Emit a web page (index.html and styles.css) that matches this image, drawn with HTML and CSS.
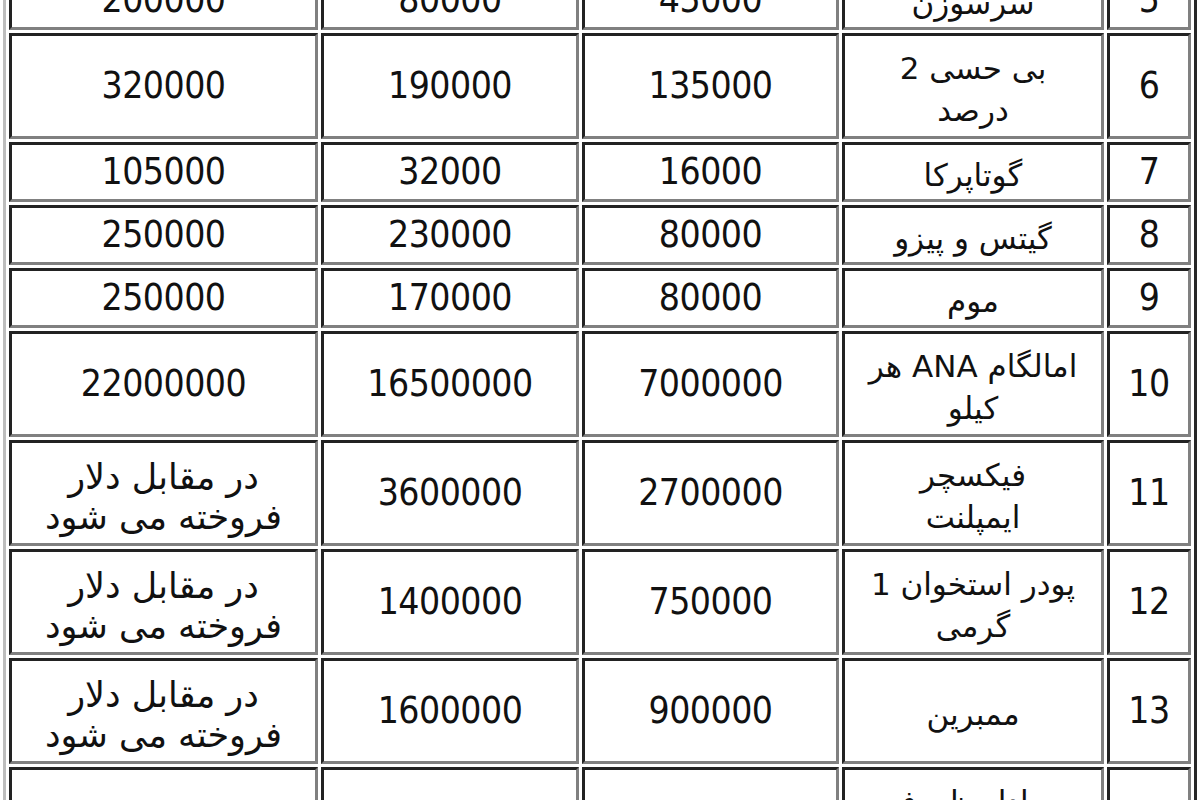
FILE: index.html
```html
<!DOCTYPE html>
<html lang="fa">
<head>
<meta charset="utf-8">
<title>قیمت مواد دندانپزشکی</title>
<link rel="stylesheet" href="styles.css">
</head>
<body>
<table class="prices" dir="rtl">
  <colgroup>
    <col class="c-idx">
    <col class="c-name">
    <col class="c-p1">
    <col class="c-p2">
    <col class="c-p3">
  </colgroup>
  <tbody>
    <tr class="single">
      <td class="num">5</td>
      <td class="txt">سرسوزن</td>
      <td class="num">45000</td>
      <td class="num">80000</td>
      <td class="num">200000</td>
    </tr>
    <tr class="double">
      <td class="num">6</td>
      <td class="txt">بی حسی 2<br>درصد</td>
      <td class="num">135000</td>
      <td class="num">190000</td>
      <td class="num">320000</td>
    </tr>
    <tr class="single">
      <td class="num">7</td>
      <td class="txt">گوتاپرکا</td>
      <td class="num">16000</td>
      <td class="num">32000</td>
      <td class="num">105000</td>
    </tr>
    <tr class="single">
      <td class="num">8</td>
      <td class="txt">گیتس و پیزو</td>
      <td class="num">80000</td>
      <td class="num">230000</td>
      <td class="num">250000</td>
    </tr>
    <tr class="single">
      <td class="num">9</td>
      <td class="txt">موم</td>
      <td class="num">80000</td>
      <td class="num">170000</td>
      <td class="num">250000</td>
    </tr>
    <tr class="double">
      <td class="num">10</td>
      <td class="txt">امالگام ANA هر<br>کیلو</td>
      <td class="num">7000000</td>
      <td class="num">16500000</td>
      <td class="num">22000000</td>
    </tr>
    <tr class="double">
      <td class="num">11</td>
      <td class="txt">فیکسچر<br>ایمپلنت</td>
      <td class="num">2700000</td>
      <td class="num">3600000</td>
      <td class="txt note">در مقابل دلار<br>فروخته می شود</td>
    </tr>
    <tr class="double">
      <td class="num">12</td>
      <td class="txt">پودر استخوان 1<br>گرمی</td>
      <td class="num">750000</td>
      <td class="num">1400000</td>
      <td class="txt note">در مقابل دلار<br>فروخته می شود</td>
    </tr>
    <tr class="double">
      <td class="num">13</td>
      <td class="txt">ممبرین</td>
      <td class="num">900000</td>
      <td class="num">1600000</td>
      <td class="txt note">در مقابل دلار<br>فروخته می شود</td>
    </tr>
    <tr class="double">
      <td class="num">14</td>
      <td class="txt">معادل ظروف<br>یکبار مصرف</td>
      <td class="num">500000</td>
      <td class="num">900000</td>
      <td class="num">1200000</td>
    </tr>
  </tbody>
</table>
</body>
</html>
```

FILE: styles.css
```css
html, body {
  margin: 0;
  padding: 0;
  background: #ffffff;
  overflow: hidden;
}

body {
  font-family: "DejaVu Sans", "Liberation Sans", sans-serif;
  color: #111111;
}

.prices {
  table-layout: fixed;
  border-collapse: separate;
  border-spacing: 3px;
  width: 1194px;
  margin: -36px 0 0 3px;
  border-style: solid;
  border-width: 3px;
  border-color: #bdbdbd #262626 #262626 #bdbdbd;
}

.c-idx { width: 84px; }
.c-name { width: 262px; }
.c-p1 { width: 257px; }
.c-p2 { width: 258px; }
.c-p3 { width: 309px; }

.prices td {
  box-sizing: border-box;
  padding: 0 6px;
  border-style: solid;
  border-width: 3px;
  border-color: #222222 #808080 #808080 #222222;
  text-align: center;
  vertical-align: middle;
  white-space: nowrap;
}

.single { height: 60px; }
.double { height: 106px; }

.num {
  font-family: "DejaVu Sans Condensed", "DejaVu Sans", sans-serif;
  font-stretch: condensed;
  font-size: 37px;
  letter-spacing: -0.5px;
  line-height: 44px;
}

.prices td.txt {
  font-family: "DejaVu Sans", sans-serif;
  font-size: 31px;
  line-height: 42px;
  padding-top: 6px;
}

.prices td.note {
  font-size: 35px;
  line-height: 40px;
  padding-top: 8px;
}
```
